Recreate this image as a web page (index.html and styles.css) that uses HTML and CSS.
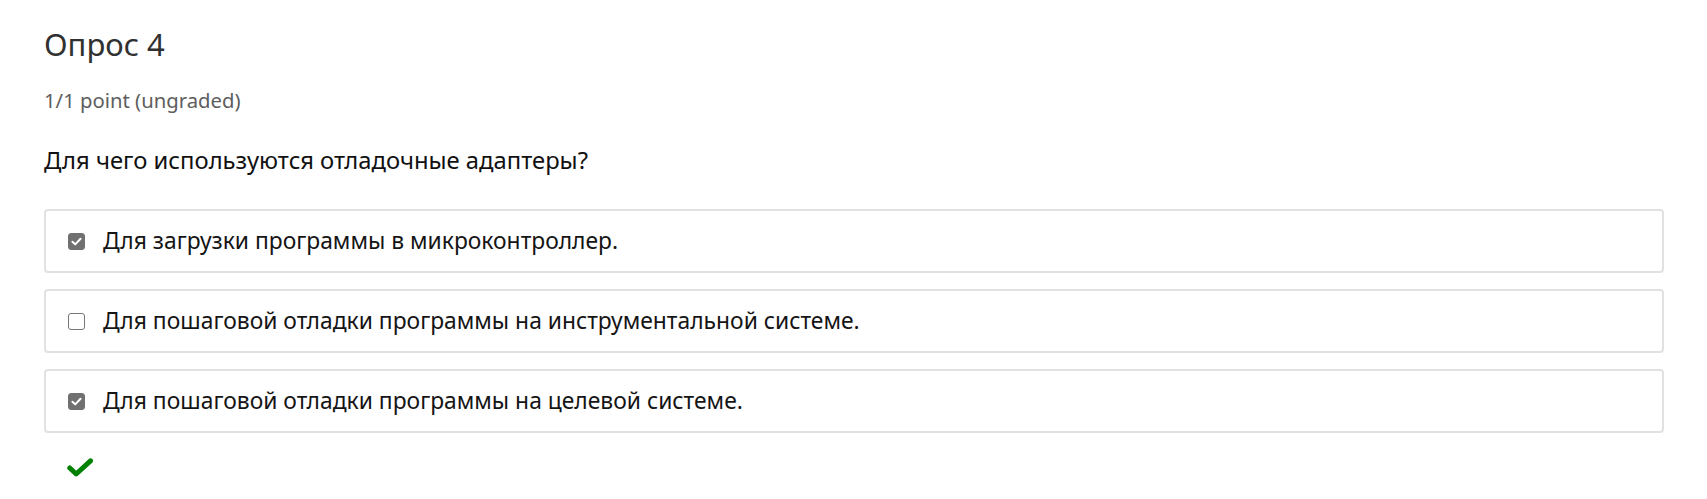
FILE: index.html
```html
<!DOCTYPE html>
<html lang="ru">
<head>
<meta charset="utf-8">
<title>Опрос 4</title>
<link rel="stylesheet" href="styles.css">
</head>
<body>
<div class="problem">
  <h2 class="title">Опрос 4</h2>
  <div class="points">1/1 point (ungraded)</div>
  <p class="question">Для чего используются отладочные адаптеры?</p>
  <div class="options">
    <label class="option">
      <span class="box checked"><svg viewBox="0 0 16 16" width="13" height="13"><path d="M3 8.3 L6.4 11.5 L13 4.6" fill="none" stroke="#fff" stroke-width="2.5" stroke-linecap="round" stroke-linejoin="round"/></svg></span>
      <span class="label">Для загрузки программы в микроконтроллер.</span>
    </label>
    <label class="option">
      <span class="box"></span>
      <span class="label">Для пошаговой отладки программы на инструментальной системе.</span>
    </label>
    <label class="option">
      <span class="box checked"><svg viewBox="0 0 16 16" width="13" height="13"><path d="M3 8.3 L6.4 11.5 L13 4.6" fill="none" stroke="#fff" stroke-width="2.5" stroke-linecap="round" stroke-linejoin="round"/></svg></span>
      <span class="label">Для пошаговой отладки программы на целевой системе.</span>
    </label>
  </div>
  <div class="status">
    <svg viewBox="0 0 26 19" width="26" height="19"><path d="M2.8 10 L9.2 16 L23.5 2.8" fill="none" stroke="#008100" stroke-width="5" stroke-linecap="round" stroke-linejoin="round"/></svg>
  </div>
</div>
</body>
</html>
```

FILE: styles.css
```css
html, body {
  margin: 0;
  padding: 0;
  background: #fff;
}
body {
  font-family: "Noto Sans", Roboto, "Liberation Sans", sans-serif;
  color: #111;
}
.problem {
  padding: 24px 43px 0 44px;
}
.title {
  margin: 0;
  font-size: 31px;
  font-weight: 400;
  line-height: 40px;
  color: #313131;
}
.points {
  margin-top: 24px;
  font-size: 20.3px;
  line-height: 24px;
  color: #5e5e5e;
}
.question {
  margin: 33px 0 0;
  font-size: 23.8px;
  line-height: 30px;
  color: #111;
}
.options {
  margin-top: 34px;
  display: flex;
  flex-direction: column;
  gap: 16px;
}
.option {
  display: flex;
  align-items: center;
  height: 64px;
  box-sizing: border-box;
  border: 2px solid #e1e1e1;
  border-radius: 4px;
  padding-left: 22px;
}
.box {
  width: 17px;
  height: 17px;
  box-sizing: border-box;
  border-radius: 3px;
  border: 1.5px solid #767676;
  background: #fff;
  display: flex;
  align-items: center;
  justify-content: center;
  flex: none;
  margin-top: 1px;
}
.box.checked {
  border-color: #707070;
  background: #707070;
}
.label {
  margin-left: 18px;
  font-size: 22.85px;
  line-height: 30px;
  color: #151515;
}
.status {
  margin-top: 25px;
  padding-left: 23px;
}
.status svg {
  display: block;
}
```
